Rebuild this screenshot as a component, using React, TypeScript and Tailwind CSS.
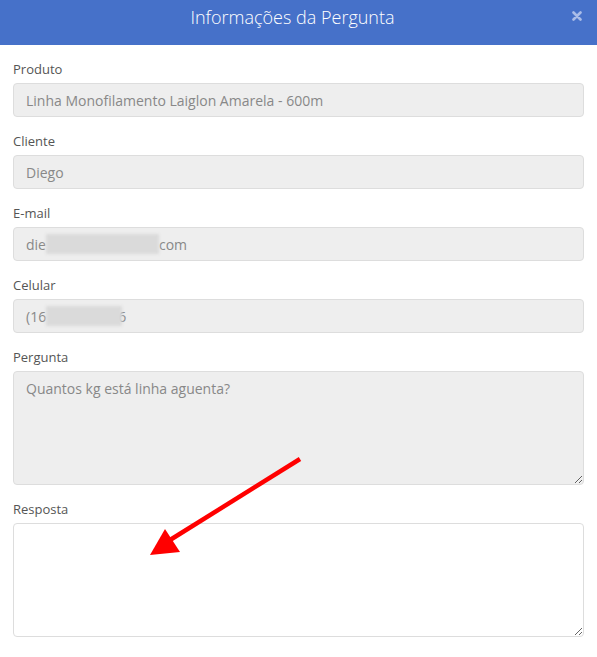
import React from "react";

const font = { fontFamily: '"Open Sans", "Noto Sans", sans-serif' };

function Label({ children }: { children: React.ReactNode }) {
  return <div className="text-[13px] leading-[18px] text-[#555] mb-[5px]">{children}</div>;
}

function Field({ children }: { children: React.ReactNode }) {
  return (
    <div className="h-[34px] flex items-center px-[12px] bg-[#eee] border border-[#ddd] rounded-[4px] text-[14px] text-[#888]">
      {children}
    </div>
  );
}

// gray blur that hides personal data
function Hidden({ w }: { w: number }) {
  return <span className="inline-block h-[20px] bg-[#dadada] blur-[1.5px]" style={{ width: w }} />;
}

export default function App() {
  return (
    <div className="w-[597px] h-[657px] bg-white relative overflow-hidden" style={font}>
      <div className="h-[45px] bg-[#4671c9] flex items-start justify-center pt-[4px] pr-[12px] relative">
        <span className="text-white text-[18px] leading-[27px] font-light">Informações da Pergunta</span>
        <svg className="absolute right-[15px] top-[11px]" width="10" height="10" viewBox="0 0 10 10">
          <path d="M1.5 1.5 L8.5 8.5 M8.5 1.5 L1.5 8.5" stroke="#aabde8" strokeWidth="2.6" strokeLinecap="round" />
        </svg>
      </div>

      <div className="px-[13px] pt-[15px] flex flex-col gap-[15px]">
        <div>
          <Label>Produto</Label>
          <Field>Linha Monofilamento Laiglon Amarela - 600m</Field>
        </div>
        <div>
          <Label>Cliente</Label>
          <Field>Diego</Field>
        </div>
        <div>
          <Label>E-mail</Label>
          <Field>
            <span>die</span>
            <Hidden w={113} />
            <span>com</span>
          </Field>
        </div>
        <div>
          <Label>Celular</Label>
          <Field>
            <span>(16</span>
            <Hidden w={76} />
            <span className="-ml-[4px]">6</span>
          </Field>
        </div>
        <div>
          <Label>Pergunta</Label>
          <textarea
            readOnly
            value="Quantos kg está linha aguenta?"
            className="block w-full h-[114px] px-[12px] py-[7px] bg-[#eee] border border-[#ddd] rounded-[4px] text-[14px] leading-[20px] text-[#888] resize-y outline-none"
          />
        </div>
        <div>
          <Label>Resposta</Label>
          <textarea
            className="block w-full h-[114px] px-[12px] py-[7px] bg-white border border-[#ddd] rounded-[4px] text-[14px] leading-[20px] text-[#555] resize-y outline-none"
          />
        </div>
      </div>

      <svg className="absolute left-0 top-0 pointer-events-none" width="597" height="657">
        <line x1="300" y1="459" x2="170" y2="540" stroke="#ff0000" strokeWidth="4.5" />
        <polygon points="150,555 165,529 180,552" fill="#ff0000" />
      </svg>
    </div>
  );
}
